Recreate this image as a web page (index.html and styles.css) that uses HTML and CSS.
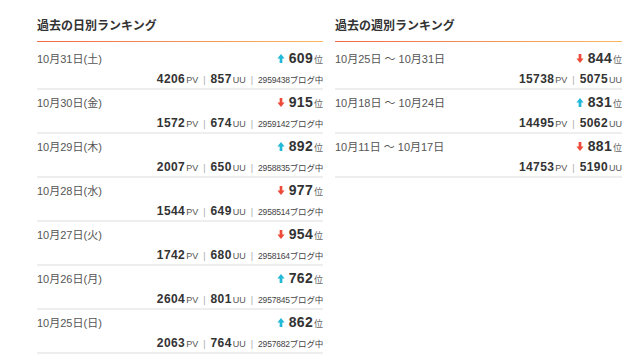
FILE: index.html
```html
<!DOCTYPE html>
<html lang="ja">
<head>
<meta charset="utf-8">
<link rel="stylesheet" href="styles.css">
</head>
<body>
<div class="page">
  <section class="col">
    <h2 class="title">過去の日別ランキング</h2>
    <div class="rule"></div>
    <ul class="list">
      <li class="row"><div class="l1"><span class="date">10月31日(土)</span><span class="rank"><svg class="arr up" viewBox="0 0 8 10"><path d="M4 0 L8 5 L5.5 5 L5.5 10 L2.5 10 L2.5 5 L0 5 Z"/></svg><b>609</b><i>位</i></span></div><div class="l2"><b>4206</b><small>PV</small><span class="bar">|</span><b>857</b><small>UU</small><span class="bar">|</span><span class="blogs">2959438ブログ中</span></div></li>
      <li class="row"><div class="l1"><span class="date">10月30日(金)</span><span class="rank"><svg class="arr down" viewBox="0 0 8 10"><path d="M4 10 L8 5 L5.5 5 L5.5 0 L2.5 0 L2.5 5 L0 5 Z"/></svg><b>915</b><i>位</i></span></div><div class="l2"><b>1572</b><small>PV</small><span class="bar">|</span><b>674</b><small>UU</small><span class="bar">|</span><span class="blogs">2959142ブログ中</span></div></li>
      <li class="row"><div class="l1"><span class="date">10月29日(木)</span><span class="rank"><svg class="arr up" viewBox="0 0 8 10"><path d="M4 0 L8 5 L5.5 5 L5.5 10 L2.5 10 L2.5 5 L0 5 Z"/></svg><b>892</b><i>位</i></span></div><div class="l2"><b>2007</b><small>PV</small><span class="bar">|</span><b>650</b><small>UU</small><span class="bar">|</span><span class="blogs">2958835ブログ中</span></div></li>
      <li class="row"><div class="l1"><span class="date">10月28日(水)</span><span class="rank"><svg class="arr down" viewBox="0 0 8 10"><path d="M4 10 L8 5 L5.5 5 L5.5 0 L2.5 0 L2.5 5 L0 5 Z"/></svg><b>977</b><i>位</i></span></div><div class="l2"><b>1544</b><small>PV</small><span class="bar">|</span><b>649</b><small>UU</small><span class="bar">|</span><span class="blogs">2958514ブログ中</span></div></li>
      <li class="row"><div class="l1"><span class="date">10月27日(火)</span><span class="rank"><svg class="arr down" viewBox="0 0 8 10"><path d="M4 10 L8 5 L5.5 5 L5.5 0 L2.5 0 L2.5 5 L0 5 Z"/></svg><b>954</b><i>位</i></span></div><div class="l2"><b>1742</b><small>PV</small><span class="bar">|</span><b>680</b><small>UU</small><span class="bar">|</span><span class="blogs">2958164ブログ中</span></div></li>
      <li class="row"><div class="l1"><span class="date">10月26日(月)</span><span class="rank"><svg class="arr up" viewBox="0 0 8 10"><path d="M4 0 L8 5 L5.5 5 L5.5 10 L2.5 10 L2.5 5 L0 5 Z"/></svg><b>762</b><i>位</i></span></div><div class="l2"><b>2604</b><small>PV</small><span class="bar">|</span><b>801</b><small>UU</small><span class="bar">|</span><span class="blogs">2957845ブログ中</span></div></li>
      <li class="row"><div class="l1"><span class="date">10月25日(日)</span><span class="rank"><svg class="arr up" viewBox="0 0 8 10"><path d="M4 0 L8 5 L5.5 5 L5.5 10 L2.5 10 L2.5 5 L0 5 Z"/></svg><b>862</b><i>位</i></span></div><div class="l2"><b>2063</b><small>PV</small><span class="bar">|</span><b>764</b><small>UU</small><span class="bar">|</span><span class="blogs">2957682ブログ中</span></div></li>
    </ul>
  </section>
  <section class="col">
    <h2 class="title">過去の週別ランキング</h2>
    <div class="rule"></div>
    <ul class="list">
      <li class="row"><div class="l1"><span class="date">10月25日 〜 10月31日</span><span class="rank"><svg class="arr down" viewBox="0 0 8 10"><path d="M4 10 L8 5 L5.5 5 L5.5 0 L2.5 0 L2.5 5 L0 5 Z"/></svg><b>844</b><i>位</i></span></div><div class="l2"><b>15738</b><small>PV</small><span class="bar">|</span><b>5075</b><small>UU</small></div></li>
      <li class="row"><div class="l1"><span class="date">10月18日 〜 10月24日</span><span class="rank"><svg class="arr up" viewBox="0 0 8 10"><path d="M4 0 L8 5 L5.5 5 L5.5 10 L2.5 10 L2.5 5 L0 5 Z"/></svg><b>831</b><i>位</i></span></div><div class="l2"><b>14495</b><small>PV</small><span class="bar">|</span><b>5062</b><small>UU</small></div></li>
      <li class="row"><div class="l1"><span class="date">10月11日 〜 10月17日</span><span class="rank"><svg class="arr down" viewBox="0 0 8 10"><path d="M4 10 L8 5 L5.5 5 L5.5 0 L2.5 0 L2.5 5 L0 5 Z"/></svg><b>881</b><i>位</i></span></div><div class="l2"><b>14753</b><small>PV</small><span class="bar">|</span><b>5190</b><small>UU</small></div></li>
    </ul>
  </section>
</div>
</body>
</html>
```
FILE: styles.css
```css
html, body {
  margin: 0;
  padding: 0;
  background: #fff;
}
body {
  font-family: "Liberation Sans", "Noto Sans CJK JP", sans-serif;
  color: #333;
}
.page {
  display: grid;
  grid-template-columns: 286px 287px;
  column-gap: 12px;
  padding: 15px 18px 0 37px;
  align-items: start;
}
.title {
  margin: 0;
  font-family: "Noto Sans CJK JP", sans-serif;
  font-size: 12px;
  font-weight: bold;
  line-height: 20px;
  color: #333;
}
.rule {
  height: 1px;
  margin-top: 6px;
  background-color: #f5905a;
  background-image: linear-gradient(to right, #ef6a46, #f9b862);
}
.list {
  list-style: none;
  margin: 4px 0 0;
  padding: 0;
}
.row {
  padding: 4px 0 1px;
  border-bottom: 2px solid #eceef0;
}
.l1 {
  display: flex;
  justify-content: space-between;
  align-items: center;
  height: 16px;
}
.date {
  font-size: 11px;
  color: #555;
}
.rank {
  display: flex;
  align-items: center;
  color: #333;
}
.arr {
  width: 8px;
  height: 9px;
  margin-right: 4px;
}
.arr.up { fill: #22b8d8; }
.arr.down { fill: #ee4a3a; }
.rank b {
  font-size: 14px;
  font-weight: bold;
  letter-spacing: 0.3px;
}
.rank i {
  font-style: normal;
  font-size: 9px;
  color: #666;
  margin-left: 1px;
  font-family: "Noto Sans CJK JP", sans-serif;
  position: relative;
  top: 1px;
}
.l2 {
  display: flex;
  justify-content: flex-end;
  align-items: baseline;
  height: 16px;
  margin-top: 5px;
  line-height: 16px;
}
.l2 b {
  font-size: 12px;
  font-weight: bold;
  color: #333;
  letter-spacing: 0.4px;
}
.l2 small {
  font-size: 9px;
  color: #555;
  margin-left: 1px;
}
.bar {
  font-size: 9px;
  color: #aaa;
  margin: 0 5px;
}
.blogs {
  font-size: 8.5px;
  color: #444;
  letter-spacing: -0.2px;
}
```
